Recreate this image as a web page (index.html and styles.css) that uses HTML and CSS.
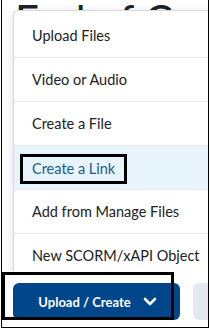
FILE: index.html
```html
<!DOCTYPE html>
<html lang="en">
<head>
    <meta charset="UTF-8">
    <meta name="viewport" content="width=device-width, initial-scale=1.0">
    <title>Upload / Create</title>
    <link rel="stylesheet" href="styles.css">
</head>
<body>
    <div class="frame">
        <div class="page">
            <h1 class="page_title">End of Course</h1>
            <ul class="menu">
                <li class="menu_item">Upload Files</li>
                <li class="menu_item">Video or Audio</li>
                <li class="menu_item">Create a File</li>
                <li class="menu_item active"><span class="marked">Create a Link</span></li>
                <li class="menu_item">Add from Manage Files</li>
                <li class="menu_item">New SCORM/xAPI Object</li>
            </ul>
        </div>
        <div class="toolbar">
            <div class="marked_box"></div>
            <button class="btn_primary">
                Upload / Create
                <svg class="chevron" width="14" height="9" viewBox="0 0 14 9">
                    <path d="M2 2 L7 7 L12 2" fill="none" stroke="#fff" stroke-width="2.6" stroke-linecap="round" stroke-linejoin="round"/>
                </svg>
            </button>
            <button class="btn_secondary"></button>
        </div>
    </div>
</body>
</html>
```
FILE: styles.css
```css
body {
    margin: 0;
    padding: 0;
    background: #ffffff;
    font-family: Lato, "Noto Sans", sans-serif;
    overflow: hidden;
}

.frame {
    position: relative;
    width: 206px;
    height: 327px;
    margin-left: 1px;
    border: 1px solid #000;
    border-top: none;
    overflow: hidden;
}

.page {
    position: relative;
    height: 271px;
    overflow: hidden;
}

.page_title {
    margin: 0;
    padding-left: 13px;
    font-size: 42px;
    font-weight: 400;
    line-height: 1;
    color: #202122;
    white-space: nowrap;
    position: relative;
    top: -1px;
}

.menu {
    position: absolute;
    left: 11px;
    top: 10px;
    width: 240px;
    margin: 0;
    padding: 3px 0 0 0;
    list-style: none;
    background: #fff;
    border: 1px solid #d6d9dc;
    border-radius: 6px;
    box-shadow: 0 2px 10px rgba(0, 0, 0, 0.12);
}

.menu_item {
    height: 43px;
    line-height: 43px;
    padding-left: 18px;
    font-size: 14.5px;
    color: #202122;
    border-bottom: 1px solid #e6e7e9;
    white-space: nowrap;
}

.menu_item.active {
    background: #e8f4fc;
    color: #1b5a8e;
}

.marked {
    display: inline-block;
    margin-left: -12px;
    padding: 4px 9px;
    line-height: 16px;
    border: 3px solid #000;
    vertical-align: middle;
}

.toolbar {
    position: relative;
    display: flex;
    gap: 13px;
    padding: 12px 0 0 11px;
}

.marked_box {
    position: absolute;
    left: 0;
    top: 1px;
    width: 166px;
    height: 42px;
    border: 3px solid #000;
}

.btn_primary {
    flex: none;
    display: flex;
    align-items: center;
    justify-content: center;
    gap: 12px;
    width: 167px;
    height: 37px;
    border: none;
    border-radius: 6px;
    background: #00468a;
    color: #fff;
    font-family: Lato, "Noto Sans", sans-serif;
    font-size: 13px;
    font-weight: 700;
    padding: 0 0 0 2px;
}

.btn_secondary {
    flex: none;
    width: 60px;
    height: 37px;
    border: none;
    border-radius: 6px;
    background: #e3e9f1;
}
```
